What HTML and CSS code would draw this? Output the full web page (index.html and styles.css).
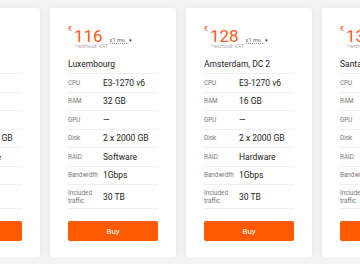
FILE: index.html
```html
<!DOCTYPE html>
<html lang="en">
<head>
    <meta charset="UTF-8">
    <meta name="viewport" content="width=device-width, initial-scale=1.0">
    <title>Dedicated servers</title>
    <link rel="stylesheet" href="styles.css">
</head>
<body>
    <div class="plans">
        <div class="plan">
            <div class="price"><span class="cur">€</span><span class="amount">99</span><span class="period">x1 mo.</span><span class="caret">▾</span></div>
            <div class="vat">*without VAT</div>
            <div class="location">Frankfurt</div>
            <div class="specs">
                <div class="row"><span class="label">CPU</span><span class="value">E-2136</span></div>
                <div class="row"><span class="label">RAM</span><span class="value">32 GB</span></div>
                <div class="row"><span class="label">GPU</span><span class="value">—</span></div>
                <div class="row"><span class="label">Disk</span><span class="value">2 x 2000 GB</span></div>
                <div class="row"><span class="label">RAID</span><span class="value">Software</span></div>
                <div class="row"><span class="label">Bandwidth</span><span class="value">1Gbps</span></div>
                <div class="row tall"><span class="label">Included traffic</span><span class="value">30 TB</span></div>
            </div>
            <button class="buy">Buy</button>
        </div>
        <div class="plan">
            <div class="price"><span class="cur">€</span><span class="amount">116</span><span class="period">x1 mo.</span><span class="caret">▾</span></div>
            <div class="vat">*without VAT</div>
            <div class="location">Luxembourg</div>
            <div class="specs">
                <div class="row"><span class="label">CPU</span><span class="value">E3-1270 v6</span></div>
                <div class="row"><span class="label">RAM</span><span class="value">32 GB</span></div>
                <div class="row"><span class="label">GPU</span><span class="value">—</span></div>
                <div class="row"><span class="label">Disk</span><span class="value">2 x 2000 GB</span></div>
                <div class="row"><span class="label">RAID</span><span class="value">Software</span></div>
                <div class="row"><span class="label">Bandwidth</span><span class="value">1Gbps</span></div>
                <div class="row tall"><span class="label">Included traffic</span><span class="value">30 TB</span></div>
            </div>
            <button class="buy">Buy</button>
        </div>
        <div class="plan">
            <div class="price"><span class="cur">€</span><span class="amount">128</span><span class="period">x1 mo.</span><span class="caret">▾</span></div>
            <div class="vat">*without VAT</div>
            <div class="location">Amsterdam, DC 2</div>
            <div class="specs">
                <div class="row"><span class="label">CPU</span><span class="value">E3-1270 v6</span></div>
                <div class="row"><span class="label">RAM</span><span class="value">16 GB</span></div>
                <div class="row"><span class="label">GPU</span><span class="value">—</span></div>
                <div class="row"><span class="label">Disk</span><span class="value">2 x 2000 GB</span></div>
                <div class="row"><span class="label">RAID</span><span class="value">Hardware</span></div>
                <div class="row"><span class="label">Bandwidth</span><span class="value">1Gbps</span></div>
                <div class="row tall"><span class="label">Included traffic</span><span class="value">30 TB</span></div>
            </div>
            <button class="buy">Buy</button>
        </div>
        <div class="plan">
            <div class="price"><span class="cur">€</span><span class="amount">135</span><span class="period">x1 mo.</span><span class="caret">▾</span></div>
            <div class="vat">*without VAT</div>
            <div class="location">Santa Clara</div>
            <div class="specs">
                <div class="row"><span class="label">CPU</span><span class="value">E3-1270 v6</span></div>
                <div class="row"><span class="label">RAM</span><span class="value">32 GB</span></div>
                <div class="row"><span class="label">GPU</span><span class="value">—</span></div>
                <div class="row"><span class="label">Disk</span><span class="value">2 x 2000 GB</span></div>
                <div class="row"><span class="label">RAID</span><span class="value">Software</span></div>
                <div class="row"><span class="label">Bandwidth</span><span class="value">1Gbps</span></div>
                <div class="row tall"><span class="label">Included traffic</span><span class="value">30 TB</span></div>
            </div>
            <button class="buy">Buy</button>
        </div>
    </div>
</body>
</html>
```

FILE: styles.css
```css
body {
    font-family: Roboto, "Liberation Sans", sans-serif;
    margin: 0;
    padding: 0;
    background: #f4f4f4;
    overflow: hidden;
}
.plans {
    display: flex;
    gap: 10px;
    margin-left: -86px;
    padding-top: 8px;
}
.plan {
    flex: 0 0 126px;
    box-sizing: border-box;
    height: 249px;
    padding: 21px 18px 0;
    background: #fff;
    border-radius: 3px;
    box-shadow: 0 0 8px rgba(0, 0, 0, 0.06);
}
.price { display: flex; align-items: baseline; height: 14px; color: #ff5a1a; }
.cur { align-self: flex-start; font-size: 7px; line-height: 7px; margin: -3px 2px 0 0; }
.amount { font-size: 17px; line-height: 14px; }
.period {
    margin-left: 7px;
    font-size: 5.6px;
    color: #666;
    border-bottom: 1px dotted #888;
    line-height: 6px;
}
.caret { font-size: 5px; color: #333; margin-left: 2px; }
.vat { font-size: 5.8px; line-height: 7px; color: #aaa; padding-left: 7px; }
.location { margin: 9px 0 4px; font-size: 8.5px; line-height: 10px; color: #222; }
.specs { border-top: 1px solid #eee; }
.row {
    display: grid;
    grid-template-columns: 35px 1fr;
    align-items: center;
    min-height: 17.5px;
    border-bottom: 1px solid #eee;
}
.row.tall { min-height: 23px; }
.label { font-size: 6.3px; line-height: 8px; color: #777; }
.value { font-size: 8.5px; color: #222; white-space: nowrap; }
.buy {
    width: 100%;
    height: 20px;
    margin-top: 12px;
    border: none;
    border-radius: 2px;
    background: #ff5a00;
    color: #fff;
    font-family: inherit;
    font-size: 8px;
    cursor: pointer;
}
```
